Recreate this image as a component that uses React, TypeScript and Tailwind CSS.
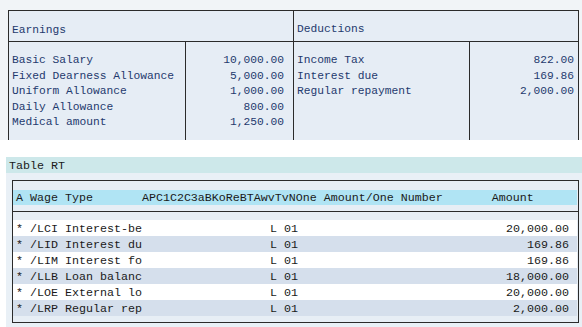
import React from "react";

const earnings = [
  ["Basic Salary", "10,000.00"],
  ["Fixed Dearness Allowance", "5,000.00"],
  ["Uniform Allowance", "1,000.00"],
  ["Daily Allowance", "800.00"],
  ["Medical amount", "1,250.00"],
];

const deductions = [
  ["Income Tax", "822.00"],
  ["Interest due", "169.86"],
  ["Regular repayment", "2,000.00"],
];

const rows = [
  ["* /LCI Interest-be", "20,000.00"],
  ["* /LID Interest du", "169.86"],
  ["* /LIM Interest fo", "169.86"],
  ["* /LLB Loan balanc", "18,000.00"],
  ["* /LOE External lo", "20,000.00"],
  ["* /LRP Regular rep", "2,000.00"],
];

export default function App() {
  return (
    <div
      className="w-[582px] h-[327px] bg-white overflow-hidden"
      style={{ fontFamily: '"Liberation Mono", "Courier New", monospace' }}
    >
      {/* Top earnings / deductions box */}
      <div className="bg-[#f1f4f7] pt-[10px] pl-[8px] w-[582px]">
        <div className="w-[571px] h-[130px] border-l border-t border-r border-[#2b2b2b] bg-[#e6edf5] flex flex-col text-[11.25px] leading-[15.5px] text-[#1f3a6e]">
          <div className="flex h-[31px] border-b border-[#2b2b2b] shrink-0">
            <div className="w-[285px] border-r border-[#2b2b2b] pl-[3px] pt-[12px]">Earnings</div>
            <div className="flex-1 pl-[3px] pt-[11px]">Deductions</div>
          </div>
          <div className="flex flex-1">
            <div className="w-[177px] border-r border-[#2b2b2b] pl-[3px] pt-[11px]">
              {earnings.map(([l]) => (
                <div key={l} className="whitespace-pre">{l}</div>
              ))}
            </div>
            <div className="w-[108px] border-r border-[#2b2b2b] pr-[9px] pt-[11px] text-right">
              {earnings.map(([l, v]) => (
                <div key={l}>{v}</div>
              ))}
            </div>
            <div className="w-[176px] border-r border-[#2b2b2b] pl-[3px] pt-[11px]">
              {deductions.map(([l]) => (
                <div key={l} className="whitespace-pre">{l}</div>
              ))}
            </div>
            <div className="flex-1 pr-[4px] pt-[11px] text-right">
              {deductions.map(([l, v]) => (
                <div key={l}>{v}</div>
              ))}
            </div>
          </div>
        </div>
      </div>

      {/* Table RT */}
      <div className="mt-[17px] ml-[6px] text-[11.67px] text-[#1a1a1a]">
        <div className="h-[16px] bg-[#cde8ea] pl-[3px] pt-[2px] leading-[14px]">Table RT</div>
        <div className="h-[154px] bg-[#e9f0f6] pl-[6px] pr-[3px] pt-[7px]">
          <div className="h-[143px] border border-[#2b2b2b] bg-[#e7eef5] flex flex-col">
            <div className="mt-[9px] h-[15px] bg-[#b0e4f4] mr-[1px] pl-[3px] pt-[2px] leading-[13px] whitespace-pre">
              {"A Wage Type       APC1C2C3aBKoReBTAwvTvNOne Amount/One Number       Amount"}
            </div>
            <div className="mt-[6px] h-px bg-[#2b2b2b]" />
            <div className="mt-[8px] mr-[1px]">
              {rows.map(([l, v], i) => (
                <div
                  key={l}
                  className={`flex h-[16px] leading-[14px] pt-[2px] pl-[3px] pr-[8px] ${i % 2 === 0 ? "bg-white" : "bg-[#d5dfec]"}`}
                >
                  <span className="w-[254px] whitespace-pre">{l}</span>
                  <span className="whitespace-pre">L 01</span>
                  <span className="flex-1 text-right">{v}</span>
                </div>
              ))}
            </div>
          </div>
        </div>
      </div>
    </div>
  );
}
